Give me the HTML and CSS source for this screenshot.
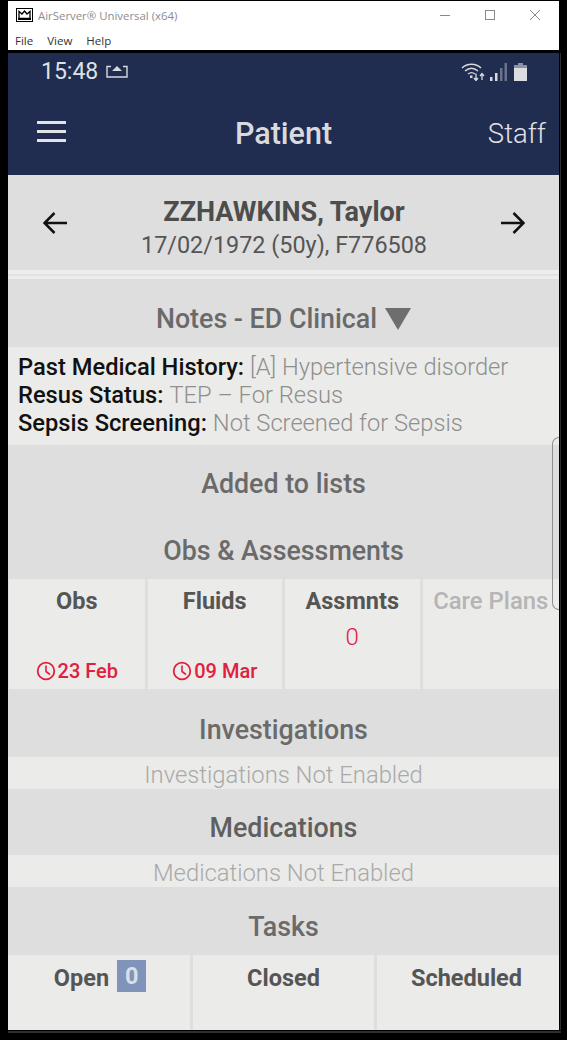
FILE: index.html
```html
<!DOCTYPE html>
<html lang="en">
<head>
<meta charset="utf-8">
<title>AirServer Universal</title>
<link rel="stylesheet" href="styles.css">
</head>
<body>
<div class="window">
  <div class="chrome">
    <div class="titlebar">
      <svg class="app-icon" width="17" height="14" viewBox="0 0 17 14"><rect x="0.5" y="0.5" width="16" height="13" fill="#fff" stroke="#000"/><path d="M3 3.500v7h11v-7l-3 2.500-2.500-3-2.500 3z" fill="none" stroke="#000" stroke-width="1.300"/><rect x="2" y="10" width="13" height="2" fill="#000"/></svg>
      <span class="title-text">AirServer® Universal (x64)</span>
      <div class="win-controls">
        <svg width="12" height="12" viewBox="0 0 12 12"><path d="M1 6.500h10" stroke="#8a8a8a"/></svg>
        <svg width="12" height="12" viewBox="0 0 12 12"><rect x="1.500" y="1.500" width="9" height="9" fill="none" stroke="#8a8a8a"/></svg>
        <svg width="12" height="12" viewBox="0 0 12 12"><path d="M1 1l10 10M11 1L1 11" stroke="#8a8a8a"/></svg>
      </div>
    </div>
    <div class="menubar"><span>File</span><span>View</span><span>Help</span></div>
  </div>
  <div class="phone">
    <header class="appbar">
      <div class="status">
        <span class="time">15:48</span>
        <svg class="cast" width="22" height="13" viewBox="0 0 22 13"><path d="M5 1.500H1v10.500h20V1.500h-4" fill="none" stroke="#d8dade" stroke-width="1.400"/><path d="M11 1l5 5H6z" fill="#d8dade"/></svg>
        <div class="status-right">
          <svg width="24" height="18" viewBox="0 0 24 18"><path d="M1 5C6 0 15 0 20 5M4 8C8 4.500 13 4.500 17 8M7 11c2-1.600 5-1.600 7 0" fill="none" stroke="#d8dade" stroke-width="1.400"/><rect x="9" y="12.500" width="2.500" height="2.500" fill="#d8dade"/><path d="M15 10.500v7M13 15l2 2.500 2-2.500M21 17v-6M19 13l2-2.500 2 2.500" fill="none" stroke="#d8dade" stroke-width="1.300"/></svg>
          <svg class="signal" width="17" height="18" viewBox="0 0 17 18"><rect x="0" y="14" width="2.500" height="4" fill="#d8dade"/><rect x="5" y="10" width="2.500" height="8" fill="#d8dade"/><rect x="10" y="5" width="2.500" height="13" fill="#6c7389"/><rect x="14.500" y="0" width="2.500" height="18" fill="#6c7389"/></svg>
          <svg class="battery" width="13" height="18" viewBox="0 0 13 18"><rect x="4" y="0" width="5" height="3" fill="#8d93a5"/><rect x="0" y="2" width="13" height="4" fill="#8d93a5"/><rect x="0" y="5" width="13" height="13" fill="#dcdde0"/></svg>
        </div>
      </div>
      <div class="navrow">
        <svg class="menu-icon" width="29" height="21" viewBox="0 0 29 21"><path d="M0 1.500h29M0 10.500h29M0 19.500h29" stroke="#e2e3e6" stroke-width="3"/></svg>
        <h1 class="nav-title">Patient</h1>
        <span class="nav-staff">Staff</span>
      </div>
    </header>

    <section class="patient">
      <svg class="arrow" width="24" height="24" viewBox="0 0 24 24"><path d="M24 12H2M11.500 2L1.500 12l10 10" fill="none" stroke="#111" stroke-width="2.500"/></svg>
      <div class="patient-info">
        <div class="patient-name">ZZHAWKINS, Taylor</div>
        <div class="patient-dob">17/02/1972 (50y), F776508</div>
      </div>
      <svg class="arrow" width="24" height="24" viewBox="0 0 24 24"><path d="M0 12h22M12.500 2l10 10-10 10" fill="none" stroke="#111" stroke-width="2.500"/></svg>
    </section>
    <div class="divider"></div>

    <div class="head"><span>Notes - ED Clinical</span><svg width="26" height="22" viewBox="0 0 26 22"><path d="M0 0h26L13 22z" fill="#6e6e6e"/></svg></div>
    <div class="notes">
      <div><b>Past Medical History:</b> <span>[A] Hypertensive disorder</span></div>
      <div><b>Resus Status:</b> <span>TEP – For Resus</span></div>
      <div><b>Sepsis Screening:</b> <span>Not Screened for Sepsis</span></div>
    </div>

    <div class="head head-lists">Added to lists</div>
    <div class="head head-obs">Obs &amp; Assessments</div>
    <div class="cells cells-4">
      <div class="cell"><div class="cell-title">Obs</div><div class="cell-date"><svg width="20" height="20" viewBox="0 0 20 20"><circle cx="10" cy="10" r="8.300" fill="none" stroke="#e0203f" stroke-width="1.800"/><path d="M10 4.500V10.500L14 13.500" fill="none" stroke="#e0203f" stroke-width="1.600"/></svg>23 Feb</div></div>
      <div class="cell"><div class="cell-title">Fluids</div><div class="cell-date"><svg width="20" height="20" viewBox="0 0 20 20"><circle cx="10" cy="10" r="8.300" fill="none" stroke="#e0203f" stroke-width="1.800"/><path d="M10 4.500V10.500L14 13.500" fill="none" stroke="#e0203f" stroke-width="1.600"/></svg>09 Mar</div></div>
      <div class="cell"><div class="cell-title">Assmnts</div><div class="cell-count">0</div></div>
      <div class="cell"><div class="cell-title cell-off">Care Plans</div></div>
    </div>

    <div class="head head-inv">Investigations</div>
    <div class="disabled">Investigations Not Enabled</div>
    <div class="head head-meds">Medications</div>
    <div class="disabled">Medications Not Enabled</div>
    <div class="head">Tasks</div>
    <div class="cells cells-3">
      <div class="cell cell-open"><div class="cell-title">Open<span class="badge">0</span></div></div>
      <div class="cell"><div class="cell-title">Closed</div></div>
      <div class="cell cell-sched"><div class="cell-title">Scheduled</div></div>
    </div>
    <div class="scroll-handle"></div>
  </div>
  <div class="edge"></div>
</div>
</body>
</html>
```

FILE: styles.css
```css
* { box-sizing: border-box; }
html, body { margin: 0; padding: 0; background: #000; }
body { width: 567px; height: 1040px; overflow: hidden; font-family: Roboto, "Liberation Sans", sans-serif; }
.window { padding: 1px 8px 0; width: 567px; }
.chrome { background: #fff; height: 49px; width: 551px; font-family: "Open Sans", "Noto Sans", sans-serif; }
.titlebar { display: flex; align-items: center; height: 28px; padding-left: 8px; }
.app-icon { margin-right: 5px; }
.title-text { font-size: 11.400px; color: #8c8c8c; }
.win-controls { margin-left: auto; display: flex; gap: 33px; padding-right: 18px; }
.menubar { display: flex; gap: 14px; padding-left: 7px; padding-top: 2px; font-size: 11.500px; color: #333; height: 21px; align-items: center; }
.phone { position: relative; margin-top: 3px; width: 551px; background: #ebebe9; box-shadow: 1px 0 0 #000, 2px 0 0 #2e2e2e; }
.appbar { background: #202c50; height: 122px; color: #e0e1e4; }
.status { display: flex; align-items: center; height: 37px; padding: 0 32px 0 33px; }
.time { font-size: 23px; color: #dfe0e3; margin-right: 8px; }
.status-right { margin-left: auto; display: flex; align-items: flex-end; }
.signal { margin-left: 5px; margin-right: 7px; }
.navrow { display: grid; grid-template-columns: 1fr auto 1fr; align-items: center; padding: 0 13px; height: 53px; margin-top: 17px; }
.menu-icon { margin-left: 16px; margin-top: -5px; }
.nav-title { margin: 0; font-size: 30.500px; font-weight: 500; color: #d9dadd; }
.nav-staff { font-size: 27.500px; font-weight: 300; color: #e0e1e4; justify-self: end; }
.patient { background: #dedede; height: 95px; display: flex; align-items: center; justify-content: space-between; padding: 0 34px 0 35px; }
.patient-info { text-align: center; margin-top: 12px; }
.patient-name { font-size: 27px; font-weight: 700; color: #4d4d4d; line-height: 34px; }
.patient-dob { font-size: 23.400px; color: #555; line-height: 34px; margin-top: -1px; }
.divider { height: 9px; background: linear-gradient(#ededeb 0 4px, #e2e2e0 4px 6px, #ededeb 6px); }
.head { height: 68px; padding-top: 12px; background: #dedede; display: flex; align-items: center; justify-content: center; gap: 8px; font-size: 26.800px; font-weight: 500; color: #6a6a6a; }
.head-lists { padding-top: 10px; }
.head-obs { padding-top: 9px; height: 66px; }
.head-inv { padding-top: 14px; }
.head-meds { height: 66px; color: #5f5f5f; }
.notes { height: 98px; padding: 6px 10px 0; font-size: 23.700px; line-height: 28px; color: #111; }
.notes b { font-weight: 500; }
.notes span { font-weight: 300; color: #8f8f8f; }
.cells { display: grid; gap: 3px; background: #dedede; }
.cells-4 { grid-template-columns: 135.500px 134.500px 134.500px 1fr; height: 110px; padding-left: 1px; }
.cells-3 { grid-template-columns: 182px 181px 1fr; height: 75px; }
.cell { background: #ebebe9; text-align: center; position: relative; padding-top: 7px; }
.cell-open { padding-left: 2px; }
.cell-sched { padding-right: 3px; }
.cells-3 .cell { padding-top: 8px; }
.cell-title { font-size: 23.500px; font-weight: 700; color: #555; line-height: 30px; }
.cell-off { color: #b5b5b5; font-size: 23.900px; font-weight: 500; white-space: nowrap; }
.cell-date { position: absolute; left: 0; right: 0; bottom: 6px; display: flex; align-items: center; justify-content: center; gap: 2px; font-size: 20px; font-weight: 500; color: #e0203f; }
.cell-count { font-size: 24px; font-weight: 300; color: #e0203f; margin-top: 7px; }
.badge { display: inline-block; margin-left: 8px; width: 29px; height: 32px; background: #8093b8; color: #d9dfe9; text-align: center; line-height: 32px; vertical-align: top; margin-top: -3px; }
.disabled { height: 32px; background: #ebebe9; font-size: 23.800px; font-weight: 300; color: #a9a9a9; text-align: center; line-height: 36px; }
.scroll-handle { position: absolute; right: 0; top: 384px; width: 7px; height: 173px; border: 1.500px solid #8e8e8e; border-right: none; border-radius: 7px 0 0 7px; }
.edge { width: 553px; height: 2px; margin-top: 1px; background: #2e2e2e; }
```
